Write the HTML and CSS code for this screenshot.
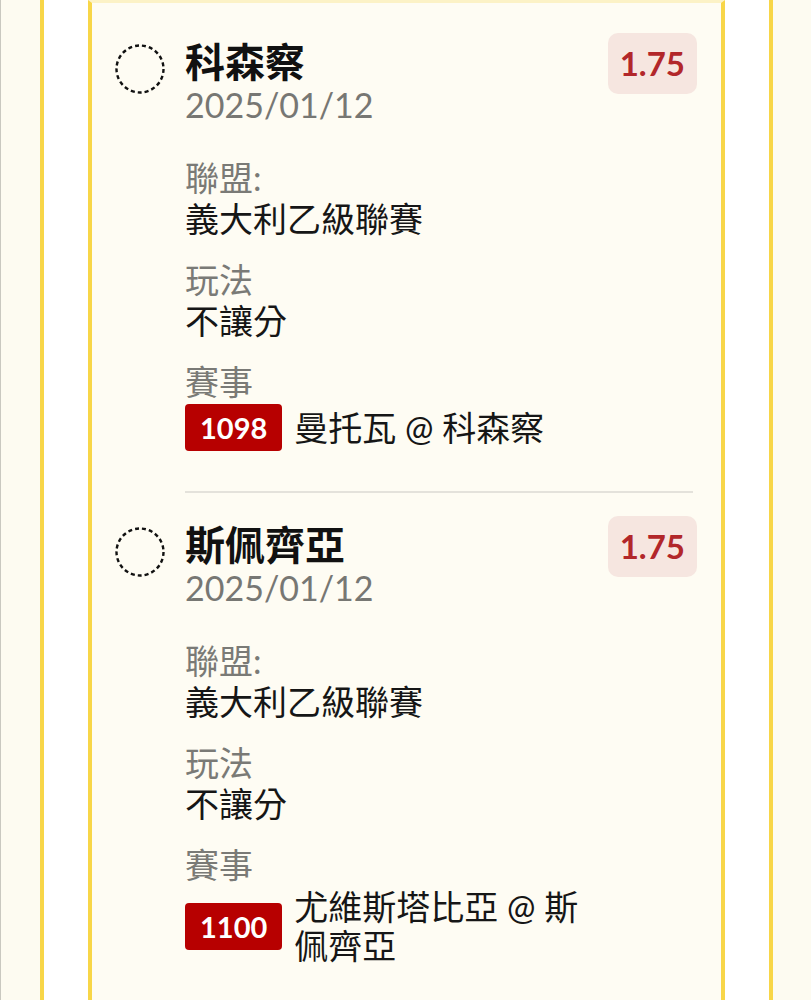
FILE: index.html
```html
<!DOCTYPE html>
<html lang="zh-Hant">
<head>
<meta charset="utf-8">
<title>投注單</title>
<link rel="stylesheet" href="styles.css">
</head>
<body>
<div class="screen">
  <div class="frame">
    <div class="card">
      <div class="item">
        <svg class="radio" viewBox="0 0 50 50" width="50" height="50"><circle cx="25" cy="25" r="23.5" fill="none" stroke="#111" stroke-width="2.4" stroke-dasharray="4 3"/></svg>
        <div class="content">
          <div class="head">
            <div class="head-text">
              <div class="title">科森察</div>
              <div class="date">2025/01/12</div>
            </div>
            <div class="odds">1.75</div>
          </div>
          <div class="details">
            <div class="label">聯盟:</div>
            <div class="value">義大利乙級聯賽</div>
            <div class="label gap">玩法</div>
            <div class="value">不讓分</div>
            <div class="label gap">賽事</div>
            <div class="event">
              <span class="code">1098</span>
              <span class="match">曼托瓦 @ 科森察</span>
            </div>
          </div>
        </div>
      </div>
      <div class="divider"></div>
      <div class="item">
        <svg class="radio" viewBox="0 0 50 50" width="50" height="50"><circle cx="25" cy="25" r="23.5" fill="none" stroke="#111" stroke-width="2.4" stroke-dasharray="4 3"/></svg>
        <div class="content">
          <div class="head">
            <div class="head-text">
              <div class="title">斯佩齊亞</div>
              <div class="date">2025/01/12</div>
            </div>
            <div class="odds">1.75</div>
          </div>
          <div class="details">
            <div class="label">聯盟:</div>
            <div class="value">義大利乙級聯賽</div>
            <div class="label gap">玩法</div>
            <div class="value">不讓分</div>
            <div class="label gap">賽事</div>
            <div class="event">
              <span class="code">1100</span>
              <span class="match">尤維斯塔比亞 @ 斯佩齊亞</span>
            </div>
          </div>
        </div>
      </div>
      <div class="divider"></div>
    </div>
  </div>
</div>
</body>
</html>
```

FILE: styles.css
```css
html, body {
  margin: 0;
  padding: 0;
}
body {
  background: #fdfbf1;
  font-family: "Lato", "Noto Sans CJK TC", sans-serif;
  color: #151515;
  overflow: hidden;
}
.screen {
  border-left: 1px solid #c9c8c0;
  min-height: 1000px;
  box-sizing: border-box;
}
.frame {
  margin-left: 39px;
  width: 733px;
  box-sizing: border-box;
  border-left: 4px solid #f8d648;
  border-right: 4px solid #f8d648;
  background: #ffffff;
  padding: 0 44px;
  min-height: 1000px;
}
.card {
  background: #fefcf3;
  border-left: 4px solid #f8d648;
  border-right: 4px solid #f8d648;
  border-top: 3px solid #fcf2c6;
  padding-top: 7px;
  min-height: 1100px;
}
.item {
  display: flex;
  align-items: flex-start;
  padding: 28px 24px 40px 23px;
}
.radio {
  flex: none;
  margin-top: 6px;
  margin-right: 20px;
  display: block;
}
.content {
  flex: 1;
  min-width: 0;
}
.head {
  display: flex;
  justify-content: space-between;
  align-items: flex-start;
}
.title {
  font-size: 40px;
  line-height: 48px;
  font-weight: 700;
  color: #111;
}
.date {
  font-size: 34px;
  line-height: 37px;
  color: #777773;
}
.odds {
  margin-top: -5px;
  background: #f6e6e0;
  color: #b2272a;
  font-weight: 700;
  font-size: 33px;
  line-height: 61px;
  padding: 0 12px;
  border-radius: 10px;
}
.details {
  margin-top: 34px;
}
.label {
  font-size: 34px;
  line-height: 41px;
  color: #7a7a76;
}
.label.gap {
  margin-top: 20px;
}
.value {
  font-size: 34px;
  line-height: 41px;
  color: #161616;
}
.event {
  display: flex;
  align-items: center;
  gap: 12px;
  margin-top: 2px;
}
.code {
  flex: none;
  background: #b70000;
  color: #fff;
  font-weight: 700;
  font-size: 29px;
  line-height: 47px;
  padding: 0 15px;
  border-radius: 4px;
}
.match {
  font-size: 34px;
  line-height: 39px;
  color: #161616;
  max-width: 296px;
}
.divider {
  height: 2px;
  background: #e4e2db;
  margin: 0 28px 0 93px;
}
```
